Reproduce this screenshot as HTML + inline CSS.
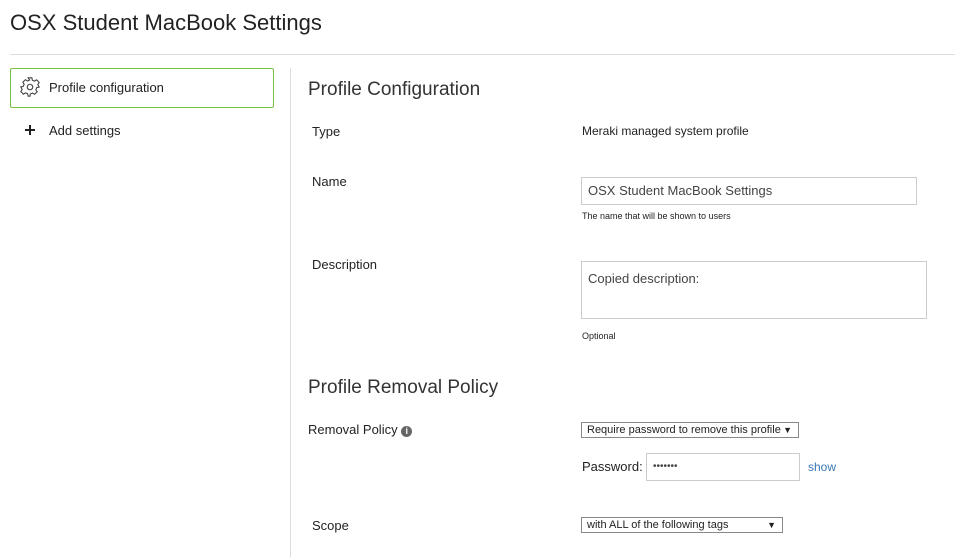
<!DOCTYPE html>
<html><head><style>
body{margin:0;width:955px;height:557px;background:#fff;font-family:"Liberation Sans",sans-serif;color:#222;position:relative;overflow:hidden}
.a{position:absolute;white-space:nowrap}
.h{font-size:19px;color:#333}
.l{font-size:13px}
.inp{position:absolute;border:1px solid #ccc;box-sizing:border-box;font-size:13px;color:#444;padding-left:6px}
.sel{position:absolute;border:1px solid #888;box-sizing:border-box;font-size:11px;padding-left:5px;line-height:14px}
.sel span{position:absolute;right:6px;top:0;font-size:9px}
</style></head><body>
<div class="a" style="left:10px;top:10px;font-size:22px;color:#222">OSX Student MacBook Settings</div>
<div class="a" style="left:10px;top:54px;width:945px;height:1px;background:#ddd"></div>
<div class="a" style="left:290px;top:68px;width:1px;height:489px;background:#ddd"></div>
<div class="a" style="left:10px;top:68px;width:262px;height:38px;border:1px solid #7ac143;border-radius:2px"></div>
<svg class="a" style="left:19px;top:76px" width="22" height="22" viewBox="0 0 24 24" fill="none" stroke="#444" stroke-width="1.2"><path d="M10 2h4l.6 2.6 2.3 1 2.3-1.4 2.8 2.8-1.4 2.3 1 2.3L22 12v0l-2.6.6-1 2.3 1.4 2.3-2.8 2.8-2.3-1.4-2.3 1L12 22h-2l-.6-2.6-2.3-1-2.3 1.4-2.8-2.8 1.4-2.3-1-2.3L2 12l2.6-.6 1-2.3L4.2 6.8 7 4l2.3 1.4 2.3-1z"/><circle cx="12" cy="12" r="3"/></svg>
<div class="a l" style="left:49px;top:80px">Profile configuration</div>
<div class="a" style="left:25px;top:129px;width:10px;height:2px;background:#222"></div>
<div class="a" style="left:29px;top:125px;width:2px;height:10px;background:#222"></div>
<div class="a l" style="left:49px;top:123px">Add settings</div>
<div class="a h" style="left:308px;top:79px">Profile Configuration</div>
<div class="a l" style="left:312px;top:124px">Type</div>
<div class="a" style="left:582px;top:124px;font-size:12px">Meraki managed system profile</div>
<div class="a l" style="left:312px;top:174px">Name</div>
<div class="inp" style="left:581px;top:177px;width:336px;height:28px;line-height:26px">OSX Student MacBook Settings</div>
<div class="a" style="left:582px;top:211px;font-size:9px">The name that will be shown to users</div>
<div class="a l" style="left:312px;top:257px">Description</div>
<div class="inp" style="left:581px;top:261px;width:346px;height:58px;padding-top:9px">Copied description:</div>
<div class="a" style="left:582px;top:331px;font-size:9px">Optional</div>
<div class="a h" style="left:308px;top:377px">Profile Removal Policy</div>
<div class="a l" style="left:308px;top:422px">Removal Policy <span style="display:inline-block;width:11px;height:11px;border-radius:50%;background:#666;color:#fff;font-size:9px;text-align:center;line-height:11px;font-weight:bold">i</span></div>
<div class="sel" style="left:581px;top:422px;width:218px;height:16px">Require password to remove this profile<span>▼</span></div>
<div class="a l" style="left:582px;top:459px">Password:</div>
<div class="inp" style="left:646px;top:453px;width:154px;height:28px;line-height:26px;font-size:10px">•••••••</div>
<div class="a" style="left:808px;top:460px;font-size:12px;color:#3a78b5">show</div>
<div class="a l" style="left:312px;top:518px">Scope</div>
<div class="sel" style="left:581px;top:517px;width:202px;height:16px">with ALL of the following tags<span>▼</span></div>
</body></html>
